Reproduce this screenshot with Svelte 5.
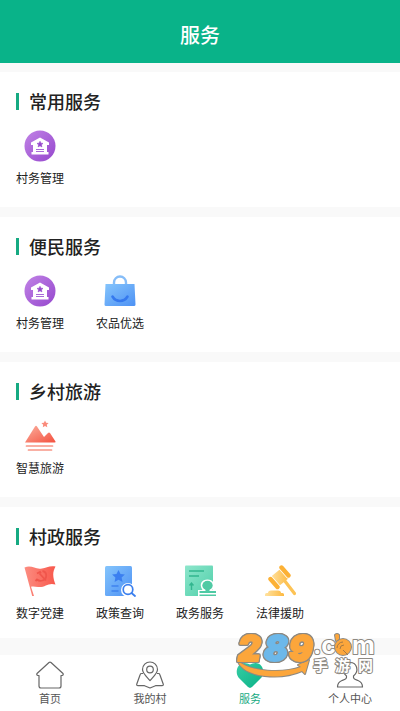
<script>
	const sections = [
		{ title: '常用服务', items: [{ name: '村务管理', icon: 'village' }] },
		{
			title: '便民服务',
			items: [
				{ name: '村务管理', icon: 'village' },
				{ name: '农品优选', icon: 'bag' },
			],
		},
		{ title: '乡村旅游', items: [{ name: '智慧旅游', icon: 'travel' }] },
		{
			title: '村政服务',
			items: [
				{ name: '数字党建', icon: 'flag' },
				{ name: '政策查询', icon: 'policy' },
				{ name: '政务服务', icon: 'stamp' },
				{ name: '法律援助', icon: 'gavel' },
			],
		},
	];

	const tabs = [
		{ name: '首页', icon: 'home' },
		{ name: '我的村', icon: 'map' },
		{ name: '服务', icon: 'heart' },
		{ name: '个人中心', icon: 'user' },
	];

	let current = $state('服务');
</script>

<!-- shared gradients -->
<svg class="defs" width="0" height="0" aria-hidden="true">
	<defs>
		<linearGradient id="purple" x1="0" y1="0" x2="1" y2="1">
			<stop offset="0" stop-color="#c183e6" /><stop offset="1" stop-color="#9547cd" />
		</linearGradient>
		<linearGradient id="blue" x1="0" y1="0" x2="1" y2="1">
			<stop offset="0" stop-color="#85c5fc" /><stop offset="1" stop-color="#4d91f4" />
		</linearGradient>
		<linearGradient id="red" x1="0" y1="0" x2="1" y2="1">
			<stop offset="0" stop-color="#fbb09f" /><stop offset="1" stop-color="#f4513f" />
		</linearGradient>
		<linearGradient id="flag-red" x1="0" y1="0" x2="1" y2="0">
			<stop offset="0" stop-color="#fc8d81" /><stop offset="1" stop-color="#f8584c" />
		</linearGradient>
		<linearGradient id="mint" x1="0" y1="0" x2="1" y2="1">
			<stop offset="0" stop-color="#8ee6cc" /><stop offset="1" stop-color="#4fcfa9" />
		</linearGradient>
		<linearGradient id="gold" x1="0" y1="0" x2="1" y2="0">
			<stop offset="0" stop-color="#ffe2a0" /><stop offset="1" stop-color="#fdb940" />
		</linearGradient>
		<linearGradient id="green" x1="0" y1="0" x2="1" y2="1">
			<stop offset="0" stop-color="#36cda4" /><stop offset="1" stop-color="#0bb287" />
		</linearGradient>
	</defs>
</svg>

<div class="page">
	<header>
		<h1>服务</h1>
	</header>

	<main>
		{#each sections as section}
			<section>
				<h2>{section.title}</h2>
				<div class="grid">
					{#each section.items as item}
						<button class="item">
							<svg class="icon" viewBox="0 0 32 32" aria-hidden="true">
								{#if item.icon === 'village'}
									<circle cx="16" cy="16" r="15.5" fill="url(#purple)" />
									<path d="M16 7.5L25 12.500V15H23V22H24.500V24.500H7.500V22H9V15H7V12.500Z" fill="#fff" />
									<path d="M16 11.300l.9 1.900 2.100.2-1.600 1.400.5 2.100-1.900-1.100-1.900 1.100.5-2.100-1.600-1.400 2.100-.2z" fill="#9547cd" stroke="#9547cd" stroke-width=".6" />
									<path d="M12 19.500h8M12 21.500h8" stroke="#a96bd9" stroke-width="1" />
								{:else if item.icon === 'bag'}
									<path d="M10 10V7.500a6 6 0 0 1 12 0V10" fill="none" stroke="#86bdf8" stroke-width="2.400" />
									<path d="M1.500 9h29l1 20.500a1.500 1.500 0 0 1-1.500 1.500H2a1.500 1.500 0 0 1-1.500-1.500z" fill="url(#blue)" />
									<path d="M8.500 21.500c3.500 6 11.500 6 15 0" fill="none" stroke="#3579ee" stroke-width="2.600" stroke-linecap="round" />
								{:else if item.icon === 'travel'}
									<path d="M1 22.500L11 6.500q1-1.500 2 0L20 17l4-4q1-1 2 0l5.500 8.500q.5 1-1 1H2q-1.500 0-1-1z" fill="url(#red)" />
									<path d="M21 .5l1.100 2.300 2.500.3-1.800 1.700.5 2.500-2.300-1.200-2.200 1.200.4-2.500-1.800-1.700 2.500-.3z" fill="#fa8b7c" />
									<path d="M2.500 26h26M4.500 30h23" stroke="#f79786" stroke-width="1.700" stroke-linecap="round" />
								{:else if item.icon === 'flag'}
									<path d="M.5 2.500C8-.5 11 5 18 3.500 22 3 26 .2 31.500 1.500 28 8 29 13 31.500 19.500 24 17 21 23 14 22c-3-.5-5-1-7-.2L10 31H8.200z" fill="url(#flag-red)" />
									<path d="M13 8.500l3-1.500 1 1.500M15.500 8.500l6.500 7M18.500 6c5 1 5 8 0 9.500-2 .6-4 .2-5.500-1L11.500 16" fill="none" stroke="#f0564c" stroke-width="1.800" />
								{:else if item.icon === 'policy'}
									<rect x="1" y="1" width="27" height="30" rx="1.500" fill="url(#blue)" />
									<path d="M14.500 5l2 4 4.400.5-3.300 3 1 4.400-4.100-2.200-3.900 2.200.8-4.400-3.300-3 4.400-.5z" fill="#3b7ff0" />
									<path d="M7.500 21h7M7.500 26h7" stroke="#3f83ee" stroke-width="1.300" />
									<circle cx="24" cy="25" r="7" fill="#fff" />
									<path d="M27 28l4 3.500" stroke="#fff" stroke-width="4" />
									<circle cx="24" cy="24.500" r="4.800" fill="#fff" stroke="#3b7fee" stroke-width="1.700" />
									<path d="M27.500 28l3.500 3" stroke="#3b7fee" stroke-width="1.800" stroke-linecap="round" />
								{:else if item.icon === 'stamp'}
									<rect x="1" y=".5" width="28" height="30.500" rx="1" fill="url(#mint)" />
									<path d="M5 6h15M5 11h10M7.500 25v-6M5.500 20.500l2-2.500 2 2.500" fill="none" stroke="#32b68f" stroke-width="1.400" />
									<path d="M14 32v-7h4.500C14.500 19 18 14.500 23.500 14.500S32 19 28.500 25H32v7z" fill="#fff" />
									<ellipse cx="23.500" cy="20.500" rx="5.200" ry="4.700" fill="#4fcaa4" />
									<path d="M21.500 24h4v2H32v2H15.500v-2h6zM15.500 29.500H32V31H15.500z" fill="#4fcaa4" />
								{:else if item.icon === 'gavel'}
									<path d="M18.500 13l12 15.500" stroke="#fdc355" stroke-width="3.200" stroke-linecap="round" />
									<path d="M6.500 12L17 3.500l8 9.500L15 21z" fill="url(#gold)" />
									<path d="M6.500 14l7 8M17.500 2.500l7 8" stroke="#fff" stroke-width="6" stroke-linecap="round" />
									<path d="M6.500 14l7 8M17.500 2.500l7 8" stroke="#fcb135" stroke-width="4.400" stroke-linecap="round" />
									<path d="M1 31v-1.500q0-1.500 1.500-1.500H4q0-2.500 3-2.500h7q3 0 3 2.500h1.500q1.500 0 1.500 1.500V31z" fill="url(#gold)" />
								{/if}
							</svg>
							<span>{item.name}</span>
						</button>
					{/each}
				</div>
			</section>
		{/each}
	</main>

	<nav>
		{#each tabs as tab}
			<button class="tab" class:active={current === tab.name} onclick={() => (current = tab.name)}>
				<svg class="tab-icon" viewBox="0 0 28 28" aria-hidden="true">
					{#if tab.icon === 'home'}
						<path d="M13 1.500q1-.9 2 0L27 12.500q.8 1.500-1 2H25V25q0 2-2 2H5q-2 0-2-2V14.500H2q-1.800-.5-1-2z" />
					{:else if tab.icon === 'map'}
						<path d="M14 19.500C9 14 6.500 12 6.500 8.500a7.500 7.500 0 0 1 15 0C21.500 12 19 14 14 19.500z" />
						<circle cx="14" cy="8.500" r="3.300" />
						<path d="M7 12.500H5.500q-1 0-1.300 1L.8 23q-.5 1.700 1.200 1.700h6.500L14 27l5.500-2.300H26q1.700 0 1.200-1.700l-3.400-9.500q-.3-1-1.300-1H21" />
					{:else if tab.icon === 'heart'}
						<path class="solid" d="M14 27Q12.500 27 10 24L2.500 16.500C-1.500 11 1.500 2 8.500 2q3 0 5.500 1.500Q16.500 2 19.500 2c7 0 10 9 6 14.500L18 24q-2.500 3-4 3z" />
					{:else}
						<path d="M10.500 15C4.500 10 7 1.500 14 1.500S23.500 10 17.500 15C17 18 19 18.500 22 19.500q4.500 1.700 4.500 6.500h-25q0-4.800 4.500-6.500C9 18.500 11 18 10.500 15z" />
					{/if}
				</svg>
				<span>{tab.name}</span>
			</button>
		{/each}
	</nav>

	<svg class="watermark" viewBox="0 0 144 44" role="img" aria-label="289.com 手游网">
		<path class="orange" d="M1 23C14 36 48 36 65 30L62 28 73 23 69 37 66 34C46 43 8 42 1 23z" />
		<text class="orange digits" x="2" y="24">2</text>
		<text class="sky digits" x="28" y="24">8</text>
		<text class="orange digits" x="53" y="24">9</text>
		<text class="plain com" x="77" y="17">.c</text>
		<text class="plain com" x="116" y="17">m</text>
		<circle class="orange" cx="107" cy="10" r="8" />
		<path class="orange" d="M99-2q2-2 4 0v4l-3 2z" />
		<path class="wave" d="M101 11a6 6 0 0 1 6-6M104 12a4 4 0 0 1 4-4M107 13l5 5" />
		<text class="plain name" x="77" y="34">手</text>
		<text class="plain name" x="99" y="34">游</text>
		<text class="plain name" x="122" y="34">网</text>
	</svg>
</div>

<style>
	:global(body) {
		margin: 0;
		background: #fff;
	}

	.defs {
		position: absolute;
	}

	.page {
		position: relative;
		display: flex;
		flex-direction: column;
		min-height: 100vh;
		font-family: "Noto Sans CJK SC", sans-serif;
		color: #222;
	}

	header {
		padding: 21px 0 14px;
		background: #09b389;
		color: #fff;
		text-align: center;
	}

	h1 {
		margin: 0;
		font-size: 20px;
		line-height: 28px;
		font-weight: 500;
	}

	main {
		flex: 1;
		display: flex;
		flex-direction: column;
		gap: 10px;
		padding: 9px 0 16px;
		background: #f9f9f9;
	}

	section {
		padding: 17px 0 20px;
		background: #fff;
	}

	section:last-child {
		padding-bottom: 16px;
	}

	h2 {
		display: flex;
		align-items: center;
		gap: 10px;
		margin: 0 16px 17px;
		font-size: 18px;
		line-height: 24px;
		font-weight: 500;
	}

	h2::before {
		content: "";
		width: 3px;
		height: 17px;
		background: #16aa82;
	}

	.grid {
		display: grid;
		grid-template-columns: repeat(5, 1fr);
	}

	button {
		display: flex;
		flex-direction: column;
		align-items: center;
		padding: 0;
		border: 0;
		background: none;
		color: inherit;
		font: inherit;
		cursor: pointer;
	}

	.item {
		gap: 7px;
		font-size: 12px;
		line-height: 18px;
	}

	.icon {
		width: 32px;
		height: 32px;
	}

	nav {
		display: grid;
		grid-template-columns: repeat(4, 1fr);
		padding: 6px 0 5px;
		background: #fff;
	}

	.tab {
		gap: 1px;
		font-size: 11px;
		line-height: 16px;
		color: #555;
	}

	.tab.active {
		color: #16aa82;
	}

	.tab-icon {
		width: 28px;
		height: 28px;
		fill: none;
		stroke: #666;
		stroke-width: 1.2;
		stroke-linejoin: round;
	}

	.solid {
		fill: url(#green);
		stroke: none;
	}

	.watermark {
		position: absolute;
		right: 20px;
		bottom: 30px;
		width: 144px;
		height: 44px;
		overflow: visible;
		pointer-events: none;
	}

	.watermark text,
	.watermark path,
	.watermark circle {
		paint-order: stroke;
		stroke: #8d8982;
		stroke-width: 2;
		stroke-linejoin: round;
	}

	.watermark .orange {
		fill: #fca63b;
	}

	.watermark .sky {
		fill: #6cb8ea;
	}

	.watermark .plain {
		fill: #fff;
	}

	.watermark .wave {
		fill: none;
		stroke: #a77a43;
		stroke-width: 1;
	}

	.digits {
		font: italic 900 35px Inter, sans-serif;
	}

	/* thickened face, the grey rim comes from the shadows */
	.watermark .digits {
		stroke: #fca63b;
		filter: drop-shadow(1px 0 0 #8d8982) drop-shadow(-1px 0 0 #8d8982) drop-shadow(0 1px 0 #8d8982) drop-shadow(0 -1px 0 #8d8982);
	}

	.watermark .digits.sky {
		stroke: #6cb8ea;
	}

	.com {
		font: 700 25px Inter, sans-serif;
	}

	.name {
		font: bold 15px "Noto Sans CJK SC", sans-serif;
	}
</style>
